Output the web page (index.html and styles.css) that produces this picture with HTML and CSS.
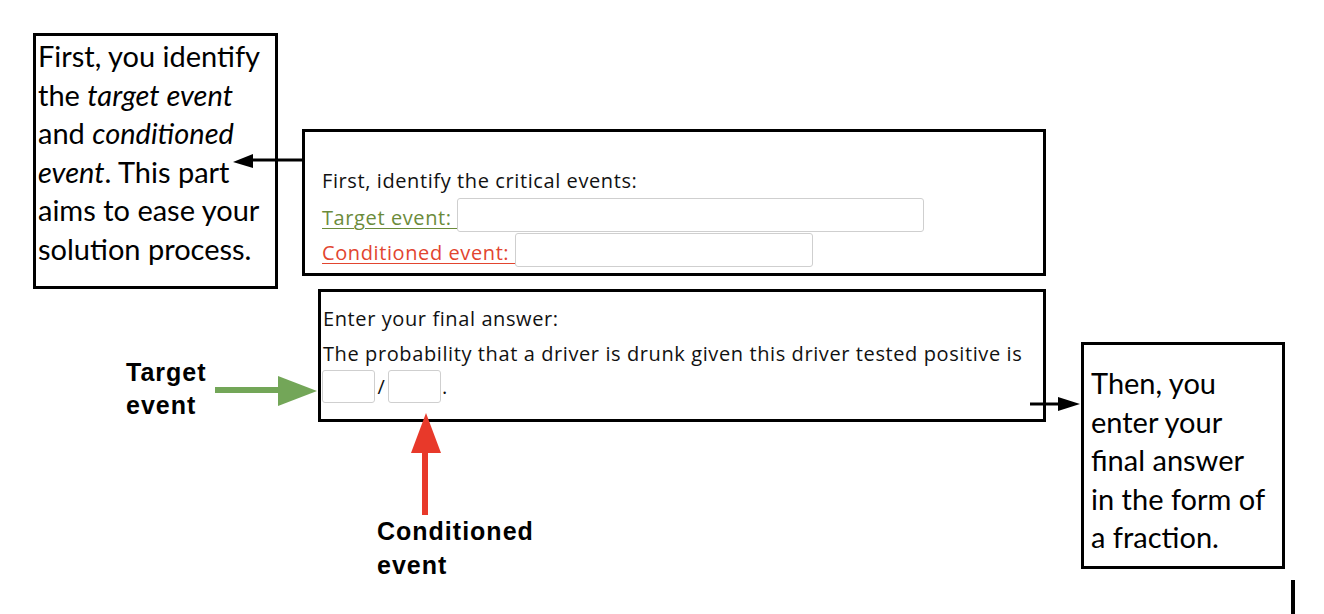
FILE: index.html
```html
<!DOCTYPE html>
<html lang="en">
<head>
<meta charset="utf-8">
<title>Conditional probability walkthrough</title>
<link rel="stylesheet" href="styles.css">
</head>
<body>
<div class="canvas">
  <div class="note note-left">
    <p>First, you identify the <em>target event</em> and <em>conditioned event</em>. This part aims to ease your solution process.</p>
  </div>

  <svg class="arrow arrow-events" width="80" height="24" viewBox="0 0 80 24">
    <line x1="17" y1="7" x2="70" y2="7" stroke="#000" stroke-width="3"/>
    <polygon points="0,9 20,1 20,15" fill="#000"/>
  </svg>

  <section class="panel panel-events">
    <p class="panel-lead">First, identify the critical events:</p>
    <div class="field-row">
      <span class="field-label label-target">Target event:&nbsp;</span>
      <span class="text-input input-target"></span>
    </div>
    <div class="field-row">
      <span class="field-label label-conditioned">Conditioned event:&nbsp;</span>
      <span class="text-input input-conditioned"></span>
    </div>
  </section>

  <section class="panel panel-answer">
    <p class="answer-line">Enter your final answer:</p>
    <p class="answer-line">The probability that a driver is drunk given this driver tested positive is</p>
    <div class="fraction-row">
      <span class="text-input input-small"></span>
      <span class="slash">/</span>
      <span class="text-input input-small"></span>
      <span class="dot">.</span>
    </div>
  </section>

  <svg class="arrow arrow-answer" width="52" height="18" viewBox="0 0 52 18">
    <line x1="0" y1="9" x2="32" y2="9" stroke="#000" stroke-width="3"/>
    <polygon points="28,2 50,9 28,16" fill="#000"/>
  </svg>

  <div class="note note-right">
    <p>Then, you enter your final answer in the form of a fraction.</p>
  </div>

  <div class="tag tag-target">Target<br>event</div>
  <svg class="arrow arrow-green" width="104" height="32" viewBox="0 0 104 32">
    <rect x="0" y="11" width="65" height="6" fill="#73a658"/>
    <polygon points="63,0 63,30 102,15" fill="#73a658"/>
  </svg>

  <svg class="arrow arrow-red" width="32" height="104" viewBox="0 0 32 104">
    <polygon points="15,0 0,40 30,40" fill="#e8392a"/>
    <rect x="11" y="38" width="6" height="64" fill="#e8392a"/>
  </svg>
  <div class="tag tag-conditioned">Conditioned<br>event</div>

  <div class="edge-mark"></div>
</div>
</body>
</html>
```

FILE: styles.css
```css
* { box-sizing: border-box; }

html, body {
  margin: 0;
  padding: 0;
  background: #fff;
}

.canvas {
  position: relative;
  width: 1324px;
  height: 614px;
  overflow: hidden;
  color: #000;
}

p { margin: 0; }

/* Callout notes */
.note {
  position: absolute;
  border: 3px solid #000;
  font-family: Lato, "Open Sans", sans-serif;
  font-size: 29px;
  line-height: 38.5px;
}
.note em { font-style: italic; }

.note-left {
  left: 33px;
  top: 33px;
  width: 245px;
  height: 256px;
  padding: 1px 2px 0 2px;
}

.note-right {
  left: 1081px;
  top: 342px;
  width: 204px;
  height: 227px;
  padding: 19px 15px 0 7px;
}

/* Form panels */
.panel {
  position: absolute;
  border: 3px solid #000;
  font-family: "Open Sans", sans-serif;
  font-size: 20px;
  letter-spacing: 0.6px;
  color: #111;
  display: flex;
  flex-direction: column;
}

.panel-events {
  left: 302px;
  top: 129px;
  width: 744px;
  height: 147px;
  padding: 36px 0 0 17px;
}

.panel-lead {
  line-height: 26px;
  margin-bottom: 3px;
}

.field-row {
  display: flex;
  align-items: center;
  height: 35px;
}

.field-label {
  text-decoration: underline;
  text-decoration-thickness: 1px;
  text-underline-offset: 3px;
  line-height: 26px;
  margin-top: 6px;
}
.label-target { color: #6b8b3a; }
.label-conditioned { color: #e2452f; }

.text-input {
  display: block;
  height: 34px;
  border: 1px solid #cfcfcf;
  border-radius: 3px;
  background: #fff;
}
.input-target { width: 467px; }
.input-conditioned { width: 298px; }

.panel-answer {
  left: 318px;
  top: 289px;
  width: 728px;
  height: 133px;
  padding: 9px 0 0 1px;
}

.answer-line {
  line-height: 35px;
  padding-left: 1px;
}

.fraction-row {
  display: flex;
  align-items: flex-end;
  margin-top: -1px;
}
.input-small {
  width: 53px;
  height: 33px;
}
.slash {
  width: 13px;
  text-align: center;
  line-height: 26px;
  margin-bottom: 3px;
}
.dot {
  line-height: 26px;
  margin-left: 1px;
  margin-bottom: 3px;
}

/* Arrows and labels of the diagram */
.arrow {
  position: absolute;
  display: block;
}
.arrow-events { left: 233px; top: 153px; }
.arrow-answer { left: 1030px; top: 395px; }
.arrow-green { left: 215px; top: 376px; }
.arrow-red { left: 411px; top: 413px; }

.tag {
  position: absolute;
  font-family: "Liberation Sans", Arial, sans-serif;
  font-weight: 700;
  font-size: 25px;
  letter-spacing: 1px;
  color: #000;
}
.tag-target {
  left: 126px;
  top: 356px;
  line-height: 33px;
}
.tag-conditioned {
  left: 377px;
  top: 514px;
  line-height: 34px;
}

.edge-mark {
  position: absolute;
  left: 1291px;
  top: 580px;
  width: 4px;
  height: 34px;
  background: #000;
}
```
